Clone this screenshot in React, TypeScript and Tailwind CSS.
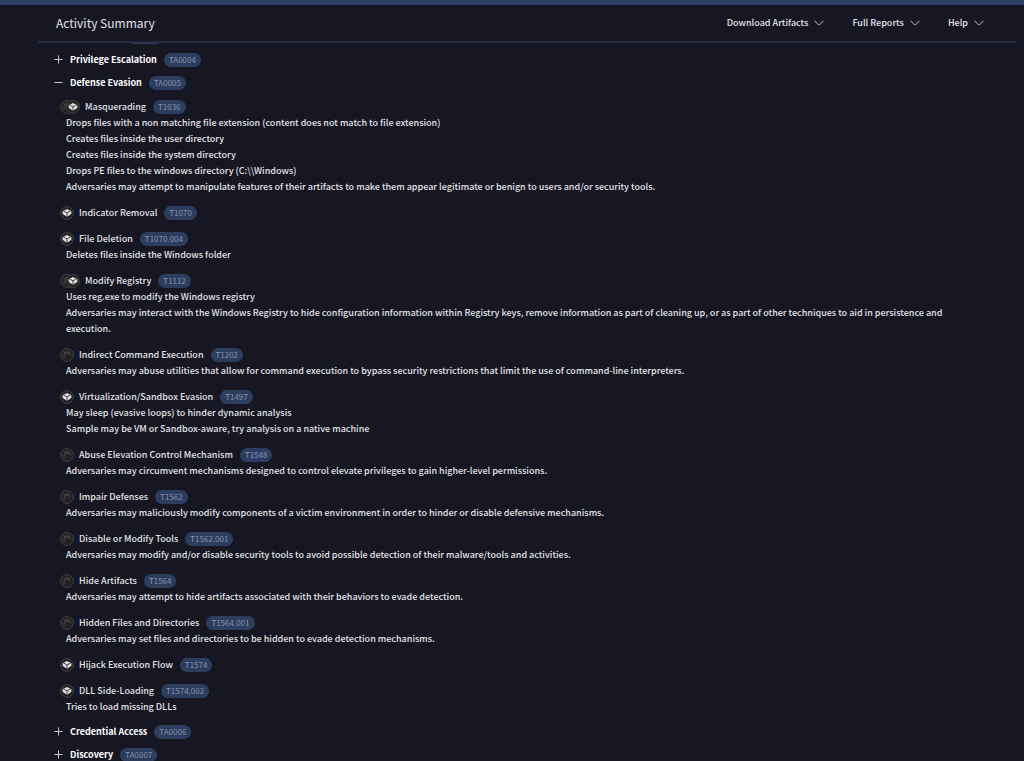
import React from 'react';

type Source = 'sandbox' | 'cube';

interface Technique {
  id: string;
  name: string;
  sources: Source[];
  notes: string[];
}

interface Tactic {
  id: string;
  name: string;
  techniques?: Technique[];
}

const menus = ['Download Artifacts', 'Full Reports', 'Help'];

const tactics: Tactic[] = [
  { id: 'TA0004', name: 'Privilege Escalation' },
  {
    id: 'TA0005',
    name: 'Defense Evasion',
    techniques: [
      {
        id: 'T1036',
        name: 'Masquerading',
        sources: ['sandbox', 'cube'],
        notes: [
          'Drops files with a non matching file extension (content does not match to file extension)',
          'Creates files inside the user directory',
          'Creates files inside the system directory',
          'Drops PE files to the windows directory (C:\\\\Windows)',
          'Adversaries may attempt to manipulate features of their artifacts to make them appear legitimate or benign to users and/or security tools.',
        ],
      },
      { id: 'T1070', name: 'Indicator Removal', sources: ['cube'], notes: [] },
      {
        id: 'T1070.004',
        name: 'File Deletion',
        sources: ['cube'],
        notes: ['Deletes files inside the Windows folder'],
      },
      {
        id: 'T1112',
        name: 'Modify Registry',
        sources: ['sandbox', 'cube'],
        notes: [
          'Uses reg.exe to modify the Windows registry',
          'Adversaries may interact with the Windows Registry to hide configuration information within Registry keys, remove information as part of cleaning up, or as part of other techniques to aid in persistence and execution.',
        ],
      },
      {
        id: 'T1202',
        name: 'Indirect Command Execution',
        sources: ['sandbox'],
        notes: [
          'Adversaries may abuse utilities that allow for command execution to bypass security restrictions that limit the use of command-line interpreters.',
        ],
      },
      {
        id: 'T1497',
        name: 'Virtualization/Sandbox Evasion',
        sources: ['cube'],
        notes: [
          'May sleep (evasive loops) to hinder dynamic analysis',
          'Sample may be VM or Sandbox-aware, try analysis on a native machine',
        ],
      },
      {
        id: 'T1548',
        name: 'Abuse Elevation Control Mechanism',
        sources: ['sandbox'],
        notes: [
          'Adversaries may circumvent mechanisms designed to control elevate privileges to gain higher-level permissions.',
        ],
      },
      {
        id: 'T1562',
        name: 'Impair Defenses',
        sources: ['sandbox'],
        notes: [
          'Adversaries may maliciously modify components of a victim environment in order to hinder or disable defensive mechanisms.',
        ],
      },
      {
        id: 'T1562.001',
        name: 'Disable or Modify Tools',
        sources: ['sandbox'],
        notes: [
          'Adversaries may modify and/or disable security tools to avoid possible detection of their malware/tools and activities.',
        ],
      },
      {
        id: 'T1564',
        name: 'Hide Artifacts',
        sources: ['sandbox'],
        notes: [
          'Adversaries may attempt to hide artifacts associated with their behaviors to evade detection.',
        ],
      },
      {
        id: 'T1564.001',
        name: 'Hidden Files and Directories',
        sources: ['sandbox'],
        notes: ['Adversaries may set files and directories to be hidden to evade detection mechanisms.'],
      },
      { id: 'T1574', name: 'Hijack Execution Flow', sources: ['cube'], notes: [] },
      {
        id: 'T1574.002',
        name: 'DLL Side-Loading',
        sources: ['cube'],
        notes: ['Tries to load missing DLLs'],
      },
    ],
  },
  { id: 'TA0006', name: 'Credential Access' },
  { id: 'TA0007', name: 'Discovery' },
];

const SourceIcon: React.FC<{ source: Source }> = ({ source }) => (
  <svg viewBox="0 0 14 14" className="w-3.5 h-3.5 shrink-0" aria-hidden="true">
    <circle cx="7" cy="7" r="6.4" fill="#222223" stroke="#434343" strokeWidth="1" />
    {source === 'cube' ? (
      <>
        <path d="M7 2.9 L11.4 5.2 V7.2 L10.2 8.8 L7 10.8 L3.8 8.8 L2.6 7.2 V5.2 Z" fill="#dcdcde" />
        <path d="M7 6.8 V11 M7 6.8 L3.4 5 M7 6.8 L10.6 5" fill="none" stroke="#3c3c3e" strokeWidth="0.9" />
      </>
    ) : (
      <>
        <path d="M3.6 10 C2.2 6.2 4.6 3.2 8 3.6 C10.4 4 11.4 6 10.6 8 C9.6 5.8 7 5.4 5.6 7 C4.8 8 4.8 9.2 5.2 10.6 Z" fill="#39393a" />
        <path d="M4 5 C5.4 3.6 8.4 3.2 10.2 5.4" fill="none" stroke="#4c4c4d" strokeWidth="0.8" />
      </>
    )}
  </svg>
);

// MITRE id pill
const Badge: React.FC<{ id: string }> = ({ id }) => (
  <a
    href={`#${id}`}
    className="h-3.5 px-[5px] rounded-full bg-[#2d3d5e] text-[#8292b2] text-[8px] leading-[13px] font-normal"
  >
    {id}
  </a>
);

const TechniqueRow: React.FC<{ technique: Technique }> = ({ technique }) => (
  <li>
    <div className="flex items-center h-4">
      <span className="flex mr-[5px]">
        {technique.sources.map((source, i) => (
          <span key={source} className={i > 0 ? '-ml-2' : ''}>
            <SourceIcon source={source} />
          </span>
        ))}
      </span>
      <h3 className="mr-[7px]">{technique.name}</h3>
      <Badge id={technique.id} />
    </div>
    {technique.notes.map((note) => (
      <p key={note} className="pl-1.5">{note}</p>
    ))}
  </li>
);

const TacticSection: React.FC<{ tactic: Tactic }> = ({ tactic }) => {
  const open = !!tactic.techniques;

  return (
    <section>
      <div className="flex items-center h-[23px]">
        <button type="button" aria-expanded={open} className="flex items-center mr-[7px] font-bold text-white">
          <svg viewBox="0 0 9 9" className="w-[9px] h-[9px] mr-[7px]" stroke="#c8c8cc" strokeWidth="1" aria-hidden="true">
            <path d={open ? 'M0.5 4.5 H8.5' : 'M0.5 4.5 H8.5 M4.5 0.5 V8.5'} />
          </svg>
          {tactic.name}
        </button>
        <Badge id={tactic.id} />
      </div>
      {tactic.techniques && (
        <ul className="flex flex-col gap-2.5 pl-1.5 pt-[5px] pb-[5px]">
          {tactic.techniques.map((technique) => (
            <TechniqueRow key={technique.id} technique={technique} />
          ))}
        </ul>
      )}
    </section>
  );
};

export default function App() {
  return (
    <div className="flex flex-col h-screen overflow-hidden bg-[#171723] text-[#e2e2e6] text-[9px] leading-4 font-medium font-['Noto_Sans_CJK_SC','Noto_Sans',sans-serif]">
      <div className="h-[5px] shrink-0 bg-[#2f4063]" />
      <header className="flex items-center justify-between h-[38px] shrink-0 ml-[38px] mr-2 pl-[18px] pr-8 border-b-2 border-[#252c40]">
        <h1 className="text-[12px] font-normal">Activity Summary</h1>
        <nav className="flex items-center gap-7">
          {menus.map((menu) => (
            <button key={menu} type="button" className="flex items-center gap-1.5">
              {menu}
              <svg viewBox="0 0 10 6" className="w-2.5 h-1.5" fill="none" stroke="#b9b9bf" strokeWidth="1" aria-hidden="true">
                <path d="M0.5 0.7 L5 5.2 L9.5 0.7" />
              </svg>
            </button>
          ))}
        </nav>
      </header>
      <main className="flex-1 min-h-0 overflow-hidden pl-[54px] pr-14">
        {/* lower edge of the pill scrolled under the header */}
        <div className="w-[28px] h-px ml-[77px] mb-1 rounded-b-full bg-[#2d3d5e]" />
        {tactics.map((tactic) => (
          <TacticSection key={tactic.id} tactic={tactic} />
        ))}
      </main>
    </div>
  );
}
